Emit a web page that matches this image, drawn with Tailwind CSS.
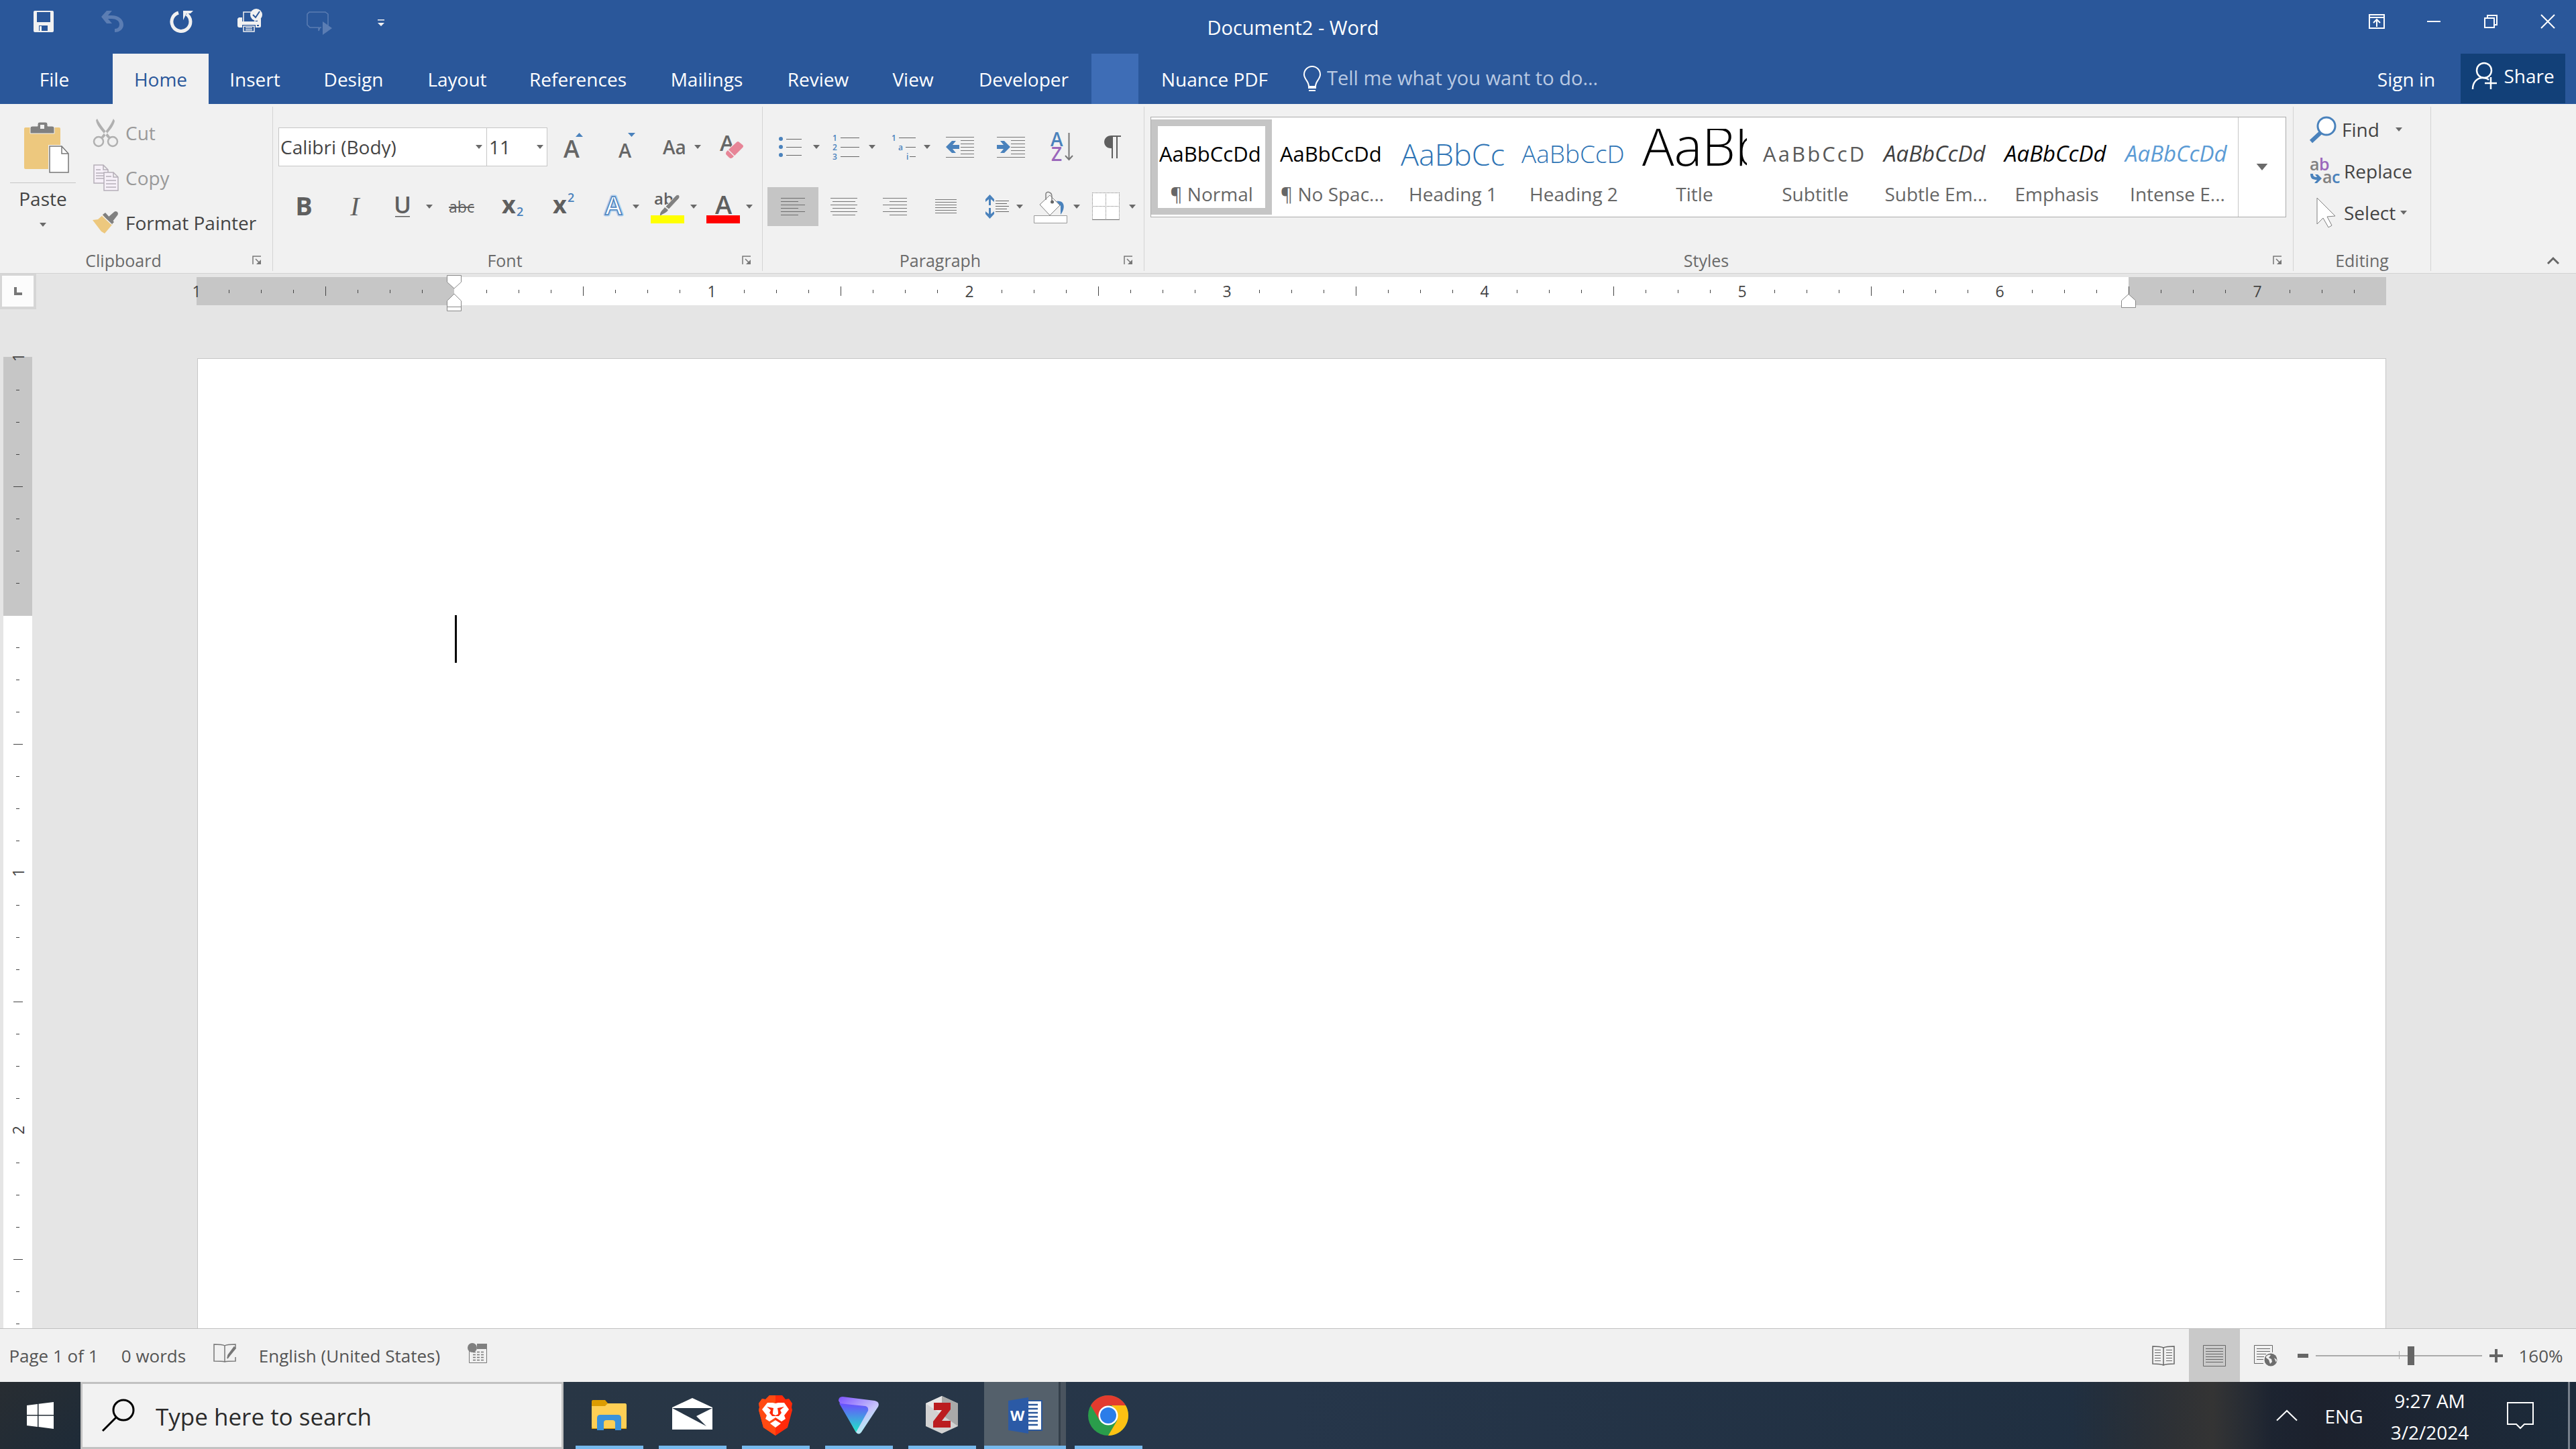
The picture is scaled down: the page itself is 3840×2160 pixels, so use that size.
<!DOCTYPE html>
<html lang="en">
<head>
<meta charset="utf-8">
<meta name="viewport" content="width=device-width, initial-scale=1">
<title>Document2 - Word</title>
<script src="https://cdn.jsdelivr.net/npm/@tailwindcss/browser@4"></script>
</head>
<body class="flex h-screen flex-col overflow-hidden bg-[#e5e5e5] font-['Open_Sans','Noto_Sans',sans-serif] text-[28px] leading-8 text-[#444] [&_svg]:overflow-visible">

<!-- Shared symbols -->
<svg class="hidden" aria-hidden="true">
  <symbol id="caret" viewBox="0 0 10 6"><path d="M0 0h10L5 6z" fill="#6a6a6a"/></symbol>
  <symbol id="launcher" viewBox="0 0 14 14"><path d="M1 13V1h12M5 5l6 6" fill="none" stroke="#777" stroke-width="1.5"/><path d="M13 6v7H6z" fill="#777"/></symbol>
</svg>

<header class="shrink-0 bg-[#2a579a] text-white">
  <div class="flex h-20">
    <div class="flex h-16 flex-1 pl-[15px]">
      <button aria-label="Save" class="flex w-[102px] items-center justify-center"><svg width="48" height="48" viewBox="0 0 48 48"><path fill="#f1f1f1" fill-rule="evenodd" d="M10 8h26a2 2 0 0 1 2 2v28a2 2 0 0 1-2 2H10a2 2 0 0 1-2-2V10a2 2 0 0 1 2-2zm3 2v15h20V10zm3 20v8h1v-7h3v7h9v-8z"/></svg></button>
      <button aria-label="Undo" class="flex w-[102px] items-center justify-center"><svg width="48" height="48" viewBox="0 0 48 48" fill="#5b7db3"><path d="M7 17 15 8h8l-6 7h5c11 0 18 6 18 14 0 6-5 11-13 11v-5c5 0 7-3 7-7 0-5-5-8-12-8h-5l6 7h-8z"/></svg></button>
      <button aria-label="Repeat" class="flex w-[102px] items-center justify-center"><svg width="48" height="48" viewBox="0 0 48 48"><path d="M20 11a14 14 0 1 0 12 2" fill="none" stroke="#f1f1f1" stroke-width="5"/><path d="M27 22V8h15l-4 4h-6z" fill="#f1f1f1"/></svg></button>
      <button aria-label="Print preview" class="flex w-[102px] items-center justify-center"><svg width="48" height="48" viewBox="0 0 48 48"><rect x="15" y="10" width="17" height="17" fill="#2a579a" stroke="#f1f1f1" stroke-width="1.5"/><path d="M8 18h5v6h23v-6h2a3 3 0 0 1 3 3v10a2 2 0 0 1-2 2h-6v-4H13v4H9a3 3 0 0 1-3-3V20z" fill="#f1f1f1"/><rect x="15" y="31" width="16" height="8" fill="#2a579a" stroke="#f1f1f1" stroke-width="1.5"/><path d="M18 33.500h10M18 36.500h10" stroke="#f1f1f1" stroke-width="1.500"/><rect x="35" y="29" width="3" height="2" fill="#2a579a"/><circle cx="34" cy="14" r="9" fill="#f1f1f1"/><path d="m29 14 4 4 6-9" fill="none" stroke="#2a579a" stroke-width="2"/></svg></button>
      <button aria-label="Touch mode" class="flex w-[102px] items-center justify-center"><svg width="48" height="48" viewBox="0 0 48 48"><path d="M29 33h-2l-2 5v-5H12l-4-4V13l3-3h24l4 3v17" fill="none" stroke="#5b7db3" stroke-width="1.500"/><path d="m31 24 14 10-14 10z" fill="#5b7db3"/></svg></button>
      <button aria-label="Customize quick access toolbar" class="flex w-[86px] items-center justify-center"><svg width="48" height="48" viewBox="0 0 48 48" fill="#f1f1f1"><path d="M19 21h10v1.500H19zM19 26h10l-5 5z"/></svg></button>
    </div>
    <h1 class="pt-[25px] text-[29px]">Document2 - Word</h1>
    <div class="flex h-16 flex-1 justify-end">
      <button aria-label="Ribbon display options" class="flex w-[85px] items-center justify-center"><svg width="24" height="22" viewBox="0 0 24 22" fill="none" stroke="#fff" stroke-width="2"><path d="M1 1h22v20H1zM1 5h22M12 19V9M7 13l5-5 5 5"/></svg></button>
      <button aria-label="Minimize" class="flex w-[85px] items-center justify-center"><svg width="20" height="20" viewBox="0 0 20 20"><path d="M0 9h20v2H0z" fill="#fff"/></svg></button>
      <button aria-label="Restore" class="flex w-[85px] items-center justify-center"><svg width="20" height="20" viewBox="0 0 20 20" fill="none" stroke="#fff" stroke-width="2"><path d="M1 5h14v14H1zM5 5V1h14v14h-4"/></svg></button>
      <button aria-label="Close" class="flex w-[85px] items-center justify-center"><svg width="20" height="20" viewBox="0 0 20 20"><path d="m0 0 20 20M20 0 0 20" stroke="#fff" stroke-width="2"/></svg></button>
    </div>
  </div>
  <nav class="flex h-[75px] items-stretch">
    <button class="mr-[6px] w-[162px]">File</button>
    <button class="w-[143px] bg-[#f1f1f1] text-[#2a579a]">Home</button>
    <button class="w-[138px]">Insert</button>
    <button class="w-[156px]">Design</button>
    <button class="w-[153px]">Layout</button>
    <button class="w-[207px]">References</button>
    <button class="w-[177px]">Mailings</button>
    <button class="w-[155px]">Review</button>
    <button class="w-[128px]">View</button>
    <button class="w-[202px]">Developer</button>
    <button aria-label="Add-in tab" class="w-[70px] bg-[#3e6db6]"></button>
    <button class="w-[227px]">Nuance PDF</button>
    <label class="flex items-center pl-[18px]">
      <svg width="28" height="40" viewBox="0 0 28 40"><path d="M9 31c0-8-7-11-7-18a12 12 0 0 1 24 0c0 7-7 10-7 18z" fill="none" stroke="#fff" stroke-width="2"/><path d="M8 30h12v4H8zM9 36h10v2H9z" fill="#fff"/></svg>
      <input type="text" placeholder="Tell me what you want to do..." aria-label="Tell me what you want to do" class="ml-2 w-[440px] bg-transparent pb-1 text-[29px] outline-none placeholder:text-[#b9c9e2]">
    </label>
    <div class="ml-auto flex pr-4">
      <button class="w-[162px]">Sign in</button>
      <button class="mb-px flex w-[156px] items-center justify-center gap-2 bg-[#124078] pb-2"><svg width="40" height="42" viewBox="0 0 40 42" fill="none" stroke="#fff" stroke-width="2.500"><circle cx="19" cy="13" r="11"/><path d="M2 41c0-10 6-17 15-17 4 0 7 1 9 3M20 32h18M29 23v18"/></svg>Share</button>
    </div>
  </nav>
</header>

<!-- Ribbon -->
<div class="flex h-[253px] shrink-0 border-b border-[#d2d2d2] bg-[#f1f1f1] pt-1 pb-[3px]">

  <section aria-label="Clipboard" class="flex w-[407px] flex-col justify-between border-r border-[#d4d4d4]">
    <div class="flex">
      <button class="flex w-32 flex-col items-center pt-[23px]">
        <svg class="ml-3" width="68" height="76" viewBox="0 0 68 76"><path d="M2 8h50a2 2 0 0 1 2 2v58a2 2 0 0 1-2 2H2a2 2 0 0 1-2-2V10a2 2 0 0 1 2-2z" fill="#edc87e"/><path d="M9 17V9a3 3 0 0 1 3-3h8V3a3 3 0 0 1 3-3h9a3 3 0 0 1 3 3v3h7a3 3 0 0 1 3 3v8z" fill="#808080" stroke="#f1f1f1"/><path d="M24 4h6v6h-6z" fill="#f1f1f1"/><path d="M36 34h32v42H36z" fill="#f1f1f1"/><path d="M38 36h18l10 11v28H38z" fill="#fff" stroke="#777" stroke-width="1.500"/><path d="M56 36v11h10" fill="none" stroke="#777" stroke-width="1.500"/></svg>
        <span class="mt-[14px] h-px w-[98px] bg-[#c6c6c6]"></span>
        <span class="mt-[7px]">Paste</span>
        <svg class="mt-5" width="10" height="6"><use href="#caret"/></svg>
      </button>
      <div class="ml-2 flex flex-col pt-[5px]">
        <button class="flex h-[67px] items-center gap-[9px] text-[#999]"><svg width="42" height="44" viewBox="0 0 42 44" fill="none" stroke="#b0b0b0"><circle cx="11" cy="35" r="7" stroke-width="2.500"/><circle cx="32" cy="35" r="7" stroke-width="2.500"/><path d="M9 1 7 3c1 8 8 15 18 27l4-1C22 19 14 12 9 1zM33 1l2 3c-1 7-7 14-17 26l-4-1C21 20 28 13 33 1z" fill="#b0b0b0" stroke="none"/></svg>Cut</button>
        <button class="flex h-[67px] items-center gap-[9px] text-[#999]"><svg width="42" height="40" viewBox="0 0 42 40" fill="#f6f0f8" stroke="#b5aeb8" stroke-width="1.500"><path d="M4 1h14l7 7v20H4zM18 1v7h7M7 8h7M7 13h14M7 17h14M7 21h14"/><path d="M19 12h14l7 7v20H19zM33 12v7h7M22 18h8M22 24h15M22 29h15M22 34h15"/></svg>Copy</button>
        <button class="flex h-[67px] items-center gap-[9px]"><svg width="42" height="36" viewBox="0 0 42 36"><path d="m2 14 8-1 8-7 14 14-12 14L15 31z" fill="#edc87e"/><path d="m17 6 4-3 13 14-4 4z" fill="#808080"/><path d="m26 9 8-7c3-3 8 1 5 5l-7 9z" fill="#808080"/><path d="m16 7 15 14" stroke="#f1f1f1" stroke-width="1.500"/></svg>Format Painter</button>
      </div>
    </div>
    <div class="flex h-8 items-center pr-4 text-[25px] text-[#6a6a6a]"><span class="flex-1 pr-2 text-center">Clipboard</span><button aria-label="Clipboard settings"><svg width="14" height="14"><use href="#launcher"/></svg></button></div>
  </section>

  <section aria-label="Font" class="flex w-[730px] flex-col justify-between border-r border-[#d4d4d4] pl-2">
    <div class="flex flex-col gap-[31px] pt-[31px]">
      <div class="flex h-[58px] items-stretch">
        <div class="relative">
          <select aria-label="Font name" class="h-[58px] w-[311px] appearance-none border border-[#c6c6c6] bg-white pl-[2px] text-[28px] outline-none"><option>Calibri (Body)</option></select>
          <svg class="pointer-events-none absolute top-[26px] right-[7px]" width="10" height="6"><use href="#caret"/></svg>
        </div>
        <div class="relative">
          <select aria-label="Font size" class="h-[58px] w-[90px] appearance-none border border-l-0 border-[#c6c6c6] bg-white pl-[3px] text-[28px] outline-none"><option>11</option></select>
          <svg class="pointer-events-none absolute top-[26px] right-[6px]" width="10" height="6"><use href="#caret"/></svg>
        </div>
        <button aria-label="Grow font" class="flex w-20 items-center justify-center"><svg width="36" height="44" viewBox="0 0 36 44"><text x="2" y="38" font-size="36" font-weight="600" fill="#666">A</text><path d="m20 7 5.500-6L31 7z" fill="#4a82bc"/></svg></button>
        <button aria-label="Shrink font" class="flex w-[76px] items-center justify-center"><svg width="36" height="44" viewBox="0 0 36 44"><text x="6" y="38" font-size="29" font-weight="600" fill="#666">A</text><path d="M20 1h11l-5.500 6z" fill="#4a82bc"/></svg></button>
        <button aria-label="Change case" class="flex w-[90px] items-center gap-3 pl-4 font-semibold text-[#666]">Aa<svg width="10" height="6"><use href="#caret"/></svg></button>
        <button aria-label="Clear formatting" class="flex w-[58px] items-center justify-center"><svg width="36" height="44" viewBox="0 0 36 44"><text x="0" y="28" font-size="33" font-weight="600" fill="#666">A</text><path d="M8 31 24 13l11 11-15 16-6-1-5-4z" fill="#f1f1f1"/><path d="M25 15q2-2 4 0l5 4q2 2 0 4L22 35l-9-9zM12 27l9 9-2 2q-3 2-5 0l-4-4q-2-2 0-5z" fill="#e78597"/></svg></button>
      </div>
      <div class="flex h-[58px] items-stretch text-[#5f5f5f]">
        <button aria-label="Bold" class="w-[76px] pb-1 text-[38px] font-bold">B</button>
        <button aria-label="Italic" class="w-[76px] font-['Liberation_Serif',serif] text-[40px] italic">I</button>
        <button aria-label="Underline" class="flex w-[83px] items-center gap-[22px] pl-5"><svg width="26" height="36" viewBox="0 0 26 36"><text x="0" y="28" font-size="35" font-weight="600" fill="#5f5f5f">U</text><path d="M2 32h22v1.500H2z" fill="#5f5f5f"/></svg><svg width="10" height="6"><use href="#caret"/></svg></button>
        <button aria-label="Strikethrough" class="w-[76px] text-[23px] line-through">abc</button>
        <button aria-label="Subscript" class="flex w-[76px] items-center justify-center"><svg width="36" height="44" viewBox="0 0 36 44"><text x="2" y="32" font-size="36" font-weight="700" fill="#5f5f5f">x</text><text x="24" y="36" font-size="18" font-weight="600" fill="#4a82bc">2</text></svg></button>
        <button aria-label="Superscript" class="flex w-[76px] items-center justify-center"><svg width="36" height="44" viewBox="0 0 36 44"><text x="2" y="32" font-size="36" font-weight="700" fill="#5f5f5f">x</text><text x="24" y="15" font-size="18" font-weight="600" fill="#4a82bc">2</text></svg></button>
        <button aria-label="Text effects" class="flex w-[84px] items-center gap-[11px] pl-5"><svg width="34" height="44" viewBox="0 0 34 44"><text x="4" y="34" font-size="38" font-weight="600" fill="#fff" stroke="#b4d0ee" stroke-width="5" stroke-linejoin="round">A</text><text x="4" y="34" font-size="38" font-weight="600" fill="#fff" stroke="#4a82bc" stroke-width="1.500">A</text></svg><svg width="10" height="6"><use href="#caret"/></svg></button>
        <button aria-label="Text highlight color" class="flex w-[83px] items-center gap-[9px] pl-2"><svg width="50" height="50" viewBox="0 0 50 50"><text x="5" y="22" font-size="24" font-weight="600" fill="#5f5f5f">ab</text><path d="M22 25 37 9c4-4 8 0 5 4L27 29z" fill="#808080" stroke="#f1f1f1"/><path d="m21 26 5 4c-3 5-8 5-12 9-1-6 4-9 7-13z" fill="#808080"/><path d="M0 38h50v12H0z" fill="#ff0"/></svg><svg width="10" height="6"><use href="#caret"/></svg></button>
        <button aria-label="Font color" class="flex w-[83px] items-center gap-[9px] pl-2"><svg width="50" height="50" viewBox="0 0 50 50"><text x="13" y="36" font-size="38" font-weight="600" fill="#5f5f5f">A</text><path d="M0 38h50v12H0z" fill="red"/></svg><svg width="10" height="6"><use href="#caret"/></svg></button>
      </div>
    </div>
    <div class="flex h-8 items-center pr-4 text-[25px] text-[#6a6a6a]"><span class="flex-1 pr-4 text-center">Font</span><button aria-label="Font settings"><svg width="14" height="14"><use href="#launcher"/></svg></button></div>
  </section>

  <section aria-label="Paragraph" class="flex w-[569px] flex-col justify-between border-r border-[#d4d4d4] pl-[7px]">
    <div class="flex flex-col gap-[31px] pt-[31px]">
      <div class="flex h-[58px] items-stretch">
        <button aria-label="Bullets" class="flex w-[85px] items-center gap-[17px] pl-4"><svg width="35" height="32" viewBox="0 0 35 32"><g fill="#4a82bc"><circle cx="4" cy="4" r="3"/><circle cx="4" cy="16" r="3"/><circle cx="4" cy="28" r="3"/></g><path d="M12 4.500h23M12 16.500h23M12 28.500h23" stroke="#666"/></svg><svg width="10" height="6"><use href="#caret"/></svg></button>
        <button aria-label="Numbering" class="flex w-[84px] items-center gap-[14px] pl-3"><svg width="40" height="40" viewBox="0 0 40 40"><g font-size="12" font-weight="600" fill="#4a82bc"><text x="0" y="11">1</text><text x="0" y="25">2</text><text x="0" y="39">3</text></g><path d="M12 6.500h28M12 20.500h28M12 34.500h28" stroke="#666"/></svg><svg width="10" height="6"><use href="#caret"/></svg></button>
        <button aria-label="Multilevel list" class="flex w-20 items-center gap-[12px] pl-4"><svg width="36" height="40" viewBox="0 0 36 40"><g font-size="12" font-weight="600" fill="#4a82bc"><text x="0" y="11">1</text><text x="10" y="25">a</text><text x="22" y="39">i</text></g><path d="M11 6.500h25M21 20.500h15M27 34.500h9" stroke="#666"/></svg><svg width="10" height="6"><use href="#caret"/></svg></button>
        <button aria-label="Decrease indent" class="flex w-[76px] items-center justify-center"><svg width="42" height="32" viewBox="0 0 42 32"><path d="M0 1.500h42M22 6.500h20M22 11.500h20M22 16.500h20M22 21.500h20M22 26.500h20M0 31.500h42" stroke="#777"/><path d="m0 16 9-9h6l-5 6h10v6H10l5 6H9z" fill="#4a82bc"/></svg></button>
        <button aria-label="Increase indent" class="flex w-[76px] items-center justify-center"><svg width="42" height="32" viewBox="0 0 42 32"><path d="M0 1.500h42M21 6.500h21M21 11.500h21M21 16.500h21M21 21.500h21M21 26.500h21M0 31.500h42" stroke="#777"/><path d="m20 16-9-9H5l5 6H0v6h10l-5 6h6z" fill="#4a82bc"/></svg></button>
        <button aria-label="Sort" class="flex w-[76px] items-center justify-center"><svg width="34" height="44" viewBox="0 0 34 44"><text x="0" y="21" font-size="28" font-weight="600" fill="#4a82bc">A</text><text x="1" y="43" font-size="28" font-weight="600" fill="#9b67bb">Z</text><path d="M27.500 1v40M22 35l5.500 6 5.500-6" fill="none" stroke="#777" stroke-width="2"/></svg></button>
        <button aria-label="Show formatting marks" class="flex w-[76px] items-center justify-center"><svg width="26" height="36" viewBox="0 0 26 36"><path d="M11 1h14v2h-5v32h-2V3h-5v32h-2V20C-3 21-4 1 11 1z" fill="#5f5f5f"/></svg></button>
      </div>
      <div class="flex h-[58px] items-stretch">
        <button aria-label="Align left" class="flex w-[76px] items-center justify-center bg-[#c5c5c5]"><svg width="36" height="28" viewBox="0 0 36 28" stroke="#6d6d6d"><path d="M0 1.500h36M0 6.500h26M0 11.500h36M0 16.500h26M0 21.500h36M0 26.500h26"/></svg></button>
        <button aria-label="Center" class="flex w-[76px] items-center justify-center"><svg width="40" height="28" viewBox="0 0 40 28" stroke="#777"><path d="M0 1.500h40M3 6.500h34M0 11.500h40M3 16.500h34M0 21.500h40M3 26.500h34"/></svg></button>
        <button aria-label="Align right" class="flex w-[76px] items-center justify-center"><svg width="36" height="28" viewBox="0 0 36 28" stroke="#777"><path d="M0 1.500h36M10 6.500h26M0 11.500h36M10 16.500h26M0 21.500h36M10 26.500h26"/></svg></button>
        <button aria-label="Justify" class="flex w-[76px] items-center justify-center"><svg width="32" height="22" viewBox="0 0 32 22" stroke="#777"><path d="M0 .5h32M0 4.500h32M0 8.500h32M0 12.500h32M0 16.500h32M0 20.500h32"/></svg></button>
        <button aria-label="Line spacing" class="flex w-[83px] items-center gap-[11px] pl-[21px]"><svg width="35" height="36" viewBox="0 0 35 36"><path d="m6.500 0 6.500 7v4L8 7v9H5V7l-5 4V7zM6.500 36l6.500-7v-4l-5 4v-9H5v9l-5-4v4z" fill="#4a82bc"/><path d="M15 9.500h20M15 13.500h17M15 17.500h20M15 21.500h17M15 25.500h20" stroke="#666"/></svg><svg width="10" height="6"><use href="#caret"/></svg></button>
        <button aria-label="Shading" class="flex w-[85px] items-center gap-[9px] pl-[10px]"><svg width="50" height="50" viewBox="0 0 50 50"><path d="M34 17c12-2 14 10 6 20V24z" fill="#4a82bc"/><path d="m24 8 15 15-15 15L9 22z" fill="#fff" stroke="#808080"/><path d="M18 15V6c0-4 9-4 9 4v8" fill="none" stroke="#808080" stroke-width="1.500"/><circle cx="27.500" cy="18" r="2.500" fill="#666"/><path d="M.5 38.500h49v11H.5z" fill="#fff" stroke="#999"/></svg><svg width="10" height="6"><use href="#caret"/></svg></button>
        <button aria-label="Borders" class="flex w-[80px] items-center gap-[14px] pl-3"><svg width="41" height="42" viewBox="0 0 41 42"><path d="M0 0h41v41H0z" fill="#fff"/><path d="M0 .5h41M0 20.500h41M.5 0v41M20.500 0v41M40.500 0v41" stroke="#777" stroke-dasharray="1 1"/><path d="M0 40.500h41" stroke="#666"/></svg><svg width="10" height="6"><use href="#caret"/></svg></button>
      </div>
    </div>
    <div class="flex h-8 items-center pr-4 text-[25px] text-[#6a6a6a]"><span class="flex-1 pr-4 text-center">Paragraph</span><button aria-label="Paragraph settings"><svg width="14" height="14"><use href="#launcher"/></svg></button></div>
  </section>

  <section aria-label="Styles" class="flex w-[1713px] flex-col justify-between border-r border-[#d4d4d4] pl-[9px]">
    <div class="pt-[15px]">
      <div class="flex h-[150px] w-[1693px] border border-[#ababab] bg-white text-[#666]">
        <button class="my-[3px] w-[180px] shrink-0 border-[10px] border-[#c5c5c5] px-[2px] pt-[3px]"><span class="flex h-14 items-end text-[31px] leading-[38px] whitespace-nowrap text-black">AaBbCcDd</span><span class="mt-5 block h-[42px] leading-[42px] whitespace-nowrap">¶ Normal</span></button>
        <button class="my-[3px] w-[180px] shrink-0 border-[10px] border-transparent px-[2px] pt-[3px]"><span class="flex h-14 items-end text-[31px] leading-[38px] whitespace-nowrap text-black">AaBbCcDd</span><span class="mt-5 block h-[42px] leading-[42px] whitespace-nowrap">¶ No Spac...</span></button>
        <button class="my-[3px] w-[180px] shrink-0 border-[10px] border-transparent px-[2px] pt-[3px]"><span class="flex h-14 items-end overflow-hidden text-[45px] leading-9 font-light whitespace-nowrap text-[#2e74b5]">AaBbCc</span><span class="mt-5 block h-[42px] leading-[42px] whitespace-nowrap">Heading 1</span></button>
        <button class="my-[3px] w-[180px] shrink-0 border-[10px] border-transparent px-[2px] pt-[3px]"><span class="flex h-14 items-end text-[37px] leading-[38px] font-light whitespace-nowrap text-[#2e74b5]">AaBbCcD</span><span class="mt-5 block h-[42px] leading-[42px] whitespace-nowrap">Heading 2</span></button>
        <button class="my-[3px] w-[180px] shrink-0 border-[10px] border-transparent px-[2px] pt-[3px]"><span class="flex h-14 items-end overflow-hidden text-[79px] leading-[62px] font-light whitespace-nowrap text-black">AaBb</span><span class="mt-5 block h-[42px] leading-[42px] whitespace-nowrap">Title</span></button>
        <button class="my-[3px] w-[180px] shrink-0 border-[10px] border-transparent px-[2px] pt-[3px]"><span class="flex h-14 items-end text-[31px] leading-[38px] tracking-widest whitespace-nowrap text-[#5a5a5a]">AaBbCcD</span><span class="mt-5 block h-[42px] leading-[42px] whitespace-nowrap">Subtitle</span></button>
        <button class="my-[3px] w-[180px] shrink-0 border-[10px] border-transparent px-[2px] pt-[3px]"><span class="flex h-14 items-end text-[33px] leading-[38px] whitespace-nowrap text-[#404040] italic">AaBbCcDd</span><span class="mt-5 block h-[42px] leading-[42px] whitespace-nowrap">Subtle Em...</span></button>
        <button class="my-[3px] w-[180px] shrink-0 border-[10px] border-transparent px-[2px] pt-[3px]"><span class="flex h-14 items-end text-[33px] leading-[38px] whitespace-nowrap text-black italic">AaBbCcDd</span><span class="mt-5 block h-[42px] leading-[42px] whitespace-nowrap">Emphasis</span></button>
        <button class="my-[3px] w-[180px] shrink-0 border-[10px] border-transparent px-[2px] pt-[3px]"><span class="flex h-14 items-end text-[33px] leading-[38px] whitespace-nowrap text-[#5b9bd5] italic">AaBbCcDd</span><span class="mt-5 block h-[42px] leading-[42px] whitespace-nowrap">Intense E...</span></button>
        <button aria-label="More styles" class="flex flex-1 items-center justify-center border-l border-[#c6c6c6]"><svg width="18" height="10"><use href="#caret"/></svg></button>
      </div>
    </div>
    <div class="flex h-8 items-center pr-4 text-[25px] text-[#6a6a6a]"><span class="flex-1 pr-4 text-center">Styles</span><button aria-label="Styles settings"><svg width="14" height="14"><use href="#launcher"/></svg></button></div>
  </section>

  <section aria-label="Editing" class="flex w-[205px] flex-col justify-between border-r border-[#d4d4d4]">
    <div class="flex flex-col items-start pt-[3px] pl-6">
      <button class="flex h-[62px] items-center gap-1"><svg width="44" height="44" viewBox="0 0 44 44"><circle cx="25" cy="17" r="13" fill="#fff" stroke="#4a82bc" stroke-width="3"/><path d="M16 27 2 40" stroke="#4a82bc" stroke-width="6"/></svg>Find<svg class="ml-5" width="10" height="6"><use href="#caret"/></svg></button>
      <button class="flex h-[62px] items-center gap-[7px]"><svg width="44" height="44" viewBox="0 0 44 44"><g font-size="25" font-weight="600"><text x="0" y="21" fill="#808080">a</text><text x="14" y="21" fill="#9b67bb">b</text><text x="19" y="40" fill="#808080">a</text><text x="33" y="40" fill="#4a82bc">c</text></g><path d="M1 26h4c0 4 2 5 6 5l-3-4h4l6 6-7 7H7l4-5C4 35 1 33 1 26z" fill="#4a82bc"/></svg>Replace</button>
      <button class="flex h-[62px] items-center gap-[7px]"><svg width="44" height="46" viewBox="0 0 44 46"><path d="M11 1v39l9-9 8 14 5-3-7-13 12-1z" fill="#fff" stroke="#808080"/></svg>Select<svg width="10" height="6"><use href="#caret"/></svg></button>
    </div>
    <div class="h-8 text-center text-[25px] text-[#6a6a6a]">Editing</div>
  </section>
  <div class="flex flex-1 items-end justify-end pr-6 pb-[10px]">
    <button aria-label="Collapse the ribbon"><svg width="20" height="12" viewBox="0 0 20 12"><path d="m2 11 8-8 8 8" fill="none" stroke="#666" stroke-width="3"/></svg></button>
  </div>
</div>

<!-- Document area -->
<main class="flex min-h-0 flex-1 flex-col overflow-hidden">
  <div class="flex h-[53px] shrink-0">
    <button aria-label="Tab selector" class="flex w-[54px] items-center justify-center border-4 border-l-[3px] border-t-[3px] border-[#d6d6d6] bg-[#fcfcfc]"><svg width="12" height="12" viewBox="0 0 12 12"><path d="M0 0h4v8h8v4H0z" fill="#777"/></svg></button>
    <div class="relative mt-[5px] mr-[283px] ml-[239px] flex h-[42px] flex-1">
      <div class="w-96 bg-[#c6c6c6]"></div>
      <div class="flex-1 bg-white"></div>
      <div class="w-96 bg-[#c6c6c6]"></div>
      <div id="h-ruler" class="absolute inset-0 flex items-center justify-between text-[23px]"></div>
      <svg class="absolute -top-[3px] left-[373px]" width="22" height="54" viewBox="0 0 22 54"><path d="M.5.500h21v10L11 20 .5 10.500zM.5 38.500L11 28l10.500 10.500v15H.5zM0 47.500h22" fill="#fff" stroke="#888"/></svg>
      <svg class="absolute top-[25px] right-[373px]" width="22" height="21" viewBox="0 0 22 21"><path d="M.5 20.500V10L11 .5 21.500 10v10.500z" fill="#fff" stroke="#888"/></svg>
    </div>
  </div>
  <div class="flex min-h-0 flex-1">
    <div class="relative mt-[71px] ml-[5px] w-[43px] shrink-0 bg-white">
      <div class="h-[386px] bg-[#c6c6c6]"></div>
      <div class="absolute inset-x-0 -top-6 bottom-0 overflow-hidden"><div id="v-ruler" class="flex flex-col items-center pt-px text-[23px]"></div></div>
    </div>
    <div role="textbox" aria-label="Document" aria-multiline="true" class="mt-[73px] mr-[283px] ml-[246px] flex-1 border border-b-0 border-[#c6c6c6] bg-white pt-[382px] pl-[383px]">
      <div class="h-[71px] w-[3px] bg-black"></div>
    </div>
  </div>
</main>

<footer class="flex h-20 shrink-0 items-stretch border-t border-[#c0c0c0] bg-[#f1f1f1] text-[26px] text-[#555]">
  <div class="flex items-center">
    <button class="w-[160px]">Page 1 of 1</button>
    <button class="w-[138px]">0 words</button>
    <button aria-label="Proofing" class="ml-5 mb-2"><svg width="36" height="30" viewBox="0 0 36 30" fill="none" stroke="#777" stroke-width="1.500"><path d="M33 8V2c-6 0-13 0-16 2-3-2-10-2-16-2v25c6 0 13 0 16 1 3-1 10-1 16-1v-6M17 4v24"/><path d="m33 8-9 11-3 4 1-5 9-12z" fill="#777"/></svg></button>
    <button class="w-[334px]">English (United States)</button>
    <button aria-label="Macro recording" class="ml-[8px] mb-2"><svg width="32" height="32" viewBox="0 0 32 32"><path d="M3.500 8v22.500h26V3" fill="none" stroke="#777"/><path d="M15 2h15v8H15z" fill="#808080"/><circle cx="8" cy="8" r="7" fill="#808080"/><path d="M9 14.500h17M9 18.500h17M9 22.500h17M9 26.500h17" stroke="#777" stroke-width="1.500" stroke-dasharray="4 2"/></svg></button>
  </div>
  <div class="ml-auto flex items-center">
    <button aria-label="Read mode" class="flex h-full w-[76px] items-center justify-center"><svg width="34" height="30" viewBox="0 0 34 30" fill="none" stroke="#666"><path d="M17 3C13 1 6 1 1 1v26c6 0 12 0 16 2 4-2 10-2 16-2V1c-5 0-12 0-16 2zM17 3v26" stroke-width="1.500"/><path d="M4 6.500h9M4 10.500h9M4 14.500h9M4 18.500h9M4 22.500h9M21 6.500h9M21 10.500h9M21 14.500h9M21 18.500h9M21 22.500h9"/></svg></button>
    <button aria-label="Print layout" class="flex h-full w-[76px] items-center justify-center bg-[#c9c9c9]"><svg width="34" height="32" viewBox="0 0 34 32" fill="none" stroke="#666"><path d="M.5.500h33v31H.5zM4 5.500h26M4 9.500h26M4 13.500h26M4 17.500h26M4 21.500h26M4 25.500h26"/></svg></button>
    <button aria-label="Web layout" class="flex h-full w-[76px] items-center justify-center"><svg width="34" height="32" viewBox="0 0 34 32"><path d="M14 27.500H.5V.500h27V11M4 5.500h20M4 9.500h20M4 13.500h14M4 17.500h11M4 21.500h10" fill="none" stroke="#666"/><circle cx="25" cy="22" r="9.500" fill="#6d6d6d"/><path d="M18 17c3-3 6-3 7-2l-3 4 4 2 1 4-3 3-2-6-4-3zM30 19l4 3-1 4z" fill="#f1f1f1"/></svg></button>
    <button aria-label="Zoom out" class="ml-[10px]"><svg width="16" height="6"><path d="M0 0h16v6H0z" fill="#666"/></svg></button>
    <div class="relative ml-[11px] flex h-10 w-[248px] items-center">
      <span class="absolute top-[13px] left-[124px] h-3 w-px bg-[#aaa]"></span>
      <input type="range" min="0" max="1000" value="576" aria-label="Zoom" class="relative h-7 w-[248px] appearance-none bg-transparent [&::-webkit-slider-runnable-track]:h-[2px] [&::-webkit-slider-runnable-track]:bg-[#aaa] [&::-webkit-slider-thumb]:-mt-[13px] [&::-webkit-slider-thumb]:h-7 [&::-webkit-slider-thumb]:w-[10px] [&::-webkit-slider-thumb]:appearance-none [&::-webkit-slider-thumb]:bg-[#666]">
    </div>
    <button aria-label="Zoom in" class="ml-[11px]"><svg width="20" height="20" viewBox="0 0 20 20"><path d="M8 0h4v8h8v4h-8v8H8v-8H0V8h8z" fill="#666"/></svg></button>
    <button class="w-[109px] pl-1">160%</button>
  </div>
</footer>

<!-- Windows taskbar -->
<div class="flex h-[100px] shrink-0 items-stretch bg-linear-to-r from-[#2a3641] via-[#26364a] to-[#1c2b3b] text-white">
  <button aria-label="Start" class="flex w-[120px] items-center justify-center bg-linear-to-br from-[#282d32] to-[#1e2b38]"><svg width="40" height="40" viewBox="0 0 40 40" fill="#fff"><path d="m0 5 16-2v16H0zM17.500 2.800 40 0v19H17.500zM0 20.500h16V37L0 35zM17.500 20.500H40V40l-22.500-3z"/></svg></button>
  <label class="flex w-[720px] items-center border-[3px] border-[#c2c2c2] bg-[#f2f2f2] pl-[29px]">
    <svg width="50" height="50" viewBox="0 0 50 50" fill="none" stroke="#000" stroke-width="3"><circle cx="32" cy="17" r="15"/><path d="M21 28 1 48"/></svg>
    <input type="text" placeholder="Type here to search" aria-label="Search" class="ml-[30px] w-[560px] bg-transparent pt-[3px] text-[35px] outline-none placeholder:text-[#2b2b2b]">
  </label>
  <div class="flex pl-[6px]">
    <button aria-label="File Explorer" class="flex w-[124px] flex-col items-center justify-between"><span class="flex h-[95px] items-center pt-1"><svg width="60" height="60" viewBox="0 0 60 60"><path d="M4 9q0-2 2-2h18l5 6h24q3 0 3 3v34H4z" fill="#dc9c00"/><path d="M4 16h20l4-4h26q2 0 2 3v32q0 2-2 2H6q-2 0-2-2z" fill="#fecf55"/><path d="M12 52V34q0-5 5-5h26q5 0 5 5v18h-9V41q0-4-4-4h-9q-4 0-4 4v11z" fill="#3a92dc"/></svg></span><span class="h-[5px] w-[101px] bg-[#76b9ed]"></span></button>
    <button aria-label="Mail" class="flex w-[124px] flex-col items-center justify-between"><span class="flex h-[95px] items-center pt-1"><svg width="60" height="60" viewBox="0 0 60 60" fill="#fff"><path d="M0 18 30 4l30 14v33H0zM0 19l51 27L36 31l24-12z" fill-rule="evenodd"/></svg></span><span class="h-[5px] w-[101px] bg-[#76b9ed]"></span></button>
    <button aria-label="Brave" class="flex w-[124px] flex-col items-center justify-between"><span class="flex h-[95px] items-center pt-1"><svg width="60" height="60" viewBox="0 0 60 60"><path d="M21 0h19l5 6 5-1 5 7-1 6 1 4-7 26-18 12-18-12L5 22l1-4-1-6 5-7 5 1z" fill="#ff2a0a"/><path d="M5 12l5-7 5 1 6-6h9v60L12 48 5 22l1-4z" fill="#ff4a12"/><path d="M18 11h8l4 1 4-1h9l7 10-7 9 2 5-6 4-9-6-9 6-6-4 2-5-7-9zM22 42l8-5 8 5-8 6z" fill="#fff"/><path d="m17 17 10 2-1 9 4 2 4-2-1-9 10-2-6 5 2 4-4 5h-10l-4-5 2-4z" fill="#ff2a0a"/><path d="m27 20 3-1 3 1 1 7-4 2-4-2z" fill="#fff"/></svg></span><span class="h-[5px] w-[101px] bg-[#76b9ed]"></span></button>
    <button aria-label="Proton VPN" class="flex w-[124px] flex-col items-center justify-between"><span class="flex h-[95px] items-center pt-1"><svg width="60" height="60" viewBox="0 0 60 60"><defs><linearGradient id="vpn-a" x1="0" y1="0" x2="0" y2="1"><stop offset="0" stop-color="#6b4dff"/><stop offset="1" stop-color="#1de9c6"/></linearGradient><linearGradient id="vpn-b" x1="0" y1="0" x2=".8" y2="1"><stop offset="0" stop-color="#7d52ff"/><stop offset=".6" stop-color="#c8c4fb"/><stop offset="1" stop-color="#a8fff0"/></linearGradient></defs><path d="M0 8q0-6 6-6l48 6q8 2 5 9L34 55q-4 5-8 0z" fill="url(#vpn-b)"/><path d="M1 12l39 4q5 1 4 7L26 55z" fill="url(#vpn-a)"/></svg></span><span class="h-[5px] w-[101px] bg-[#76b9ed]"></span></button>
    <button aria-label="Zotero" class="flex w-[124px] flex-col items-center justify-between"><span class="flex h-[95px] items-center pt-1"><svg width="60" height="60" viewBox="0 0 60 60"><path d="m30 1 24 11v34L30 57 6 46V12z" fill="#d2d2d2"/><path d="m30 1 24 11v34L30 29z" fill="#a9a9a9"/><path d="M30 1v28L6 12z" fill="#e6e6e6"/><path d="M18 11h25v10L30 38h13v10H17V39l13-17H18z" fill="#bb1d20"/></svg></span><span class="h-[5px] w-[101px] bg-[#76b9ed]"></span></button>
    <button aria-label="Word" class="mx-px flex w-[122px] flex-col justify-between bg-[#54606b]"><span class="flex h-[95px] w-full border-r-[8px] border-[#4a545f]"><span class="flex flex-1 items-center justify-center border-r-[3px] border-[#343f4a] pt-1 pl-3"><svg width="60" height="60" viewBox="0 0 60 60"><path d="M30 8h24v44H30z" fill="#fff" stroke="#2b579a" stroke-width="2"/><path d="M34 14h14M34 20h14M34 26h14M34 32h14M34 38h14M34 44h14" stroke="#2b579a" stroke-width="2.500"/><path d="M4 8 34 3v54L4 52z" fill="#2b5aa6"/><text x="7" y="38" font-size="22" font-weight="700" fill="#fff">W</text></svg></span></span><span class="h-[5px] w-full bg-[#76b9ed]"></span></button>
    <button aria-label="Chrome" class="flex w-[124px] flex-col items-center justify-between"><span class="flex h-[95px] items-center pt-1"><svg width="60" height="60" viewBox="0 0 60 60"><circle cx="30" cy="30" r="30" fill="#2a9d4b"/><path d="M4 15a30 30 0 0 1 52 0H30L17 37z" fill="#e33b2e"/><path d="M56 15a30 30 0 0 1-26 45l13-22q3-12-8-23z" fill="#fdc113"/><circle cx="30" cy="30" r="14.500" fill="#fff"/><circle cx="30" cy="30" r="12" fill="#2b7de9"/></svg></span><span class="h-[5px] w-[101px] bg-[#76b9ed]"></span></button>
  </div>
  <div class="ml-auto flex items-center bg-linear-to-r from-transparent from-0% via-[#1c212d] via-50% to-transparent to-100% text-[28px]">
    <div class="h-full w-[300px] bg-linear-to-r from-transparent via-[#343434] via-70% to-transparent"></div>
    <button aria-label="Show hidden icons" class="flex w-[42px] justify-center"><svg width="32" height="18" viewBox="0 0 32 18"><path d="M1 16.500 16 2l15 14.500" fill="none" stroke="#fff" stroke-width="2"/></svg></button>
    <button class="w-32 pt-[2px]">ENG</button>
    <button class="w-32 pt-[3px] leading-[47px] whitespace-nowrap">9:27 AM<br>3/2/2024</button>
    <button aria-label="Notifications" class="flex w-[142px] justify-center"><svg width="40" height="40" viewBox="0 0 40 40"><path d="M1 1h38v32H26l-6 6-6-6H1z" fill="none" stroke="#fff" stroke-width="2"/></svg></button>
    <button aria-label="Show desktop" class="h-full w-3 border-l-[3px] border-[#77808b]"></button>
  </div>
</div>

<script>
  const tickH = { small: 'h-[5px] w-px bg-[#444]', half: 'h-[14px] w-px bg-[#444]' };
  const tickV = { small: 'h-px w-[5px] bg-[#444]', half: 'h-px w-[14px] bg-[#444]' };

  // One entry per eighth of an inch; whole inches carry a number.
  function mark(i, tick) {
    const span = document.createElement('span');
    if (i % 8 === 0) span.textContent = i === 8 ? '' : Math.abs(i / 8 - 1);
    else span.className = i % 4 === 0 ? tick.half : tick.small;
    return span;
  }

  const h = document.getElementById('h-ruler');
  for (let i = 0; i <= 68; i++) {
    const cell = document.createElement('div');
    cell.className = 'flex w-0 justify-center';
    if (i < 68) { const m = mark(i, tickH); m.classList.add('shrink-0'); cell.append(m); }
    h.append(cell);
  }

  const v = document.getElementById('v-ruler');
  for (let i = 0; i <= 30; i++) {
    const cell = document.createElement('div');
    cell.className = 'flex h-12 shrink-0 items-center justify-center';
    const m = mark(i, tickV);
    if (i % 8 === 0) m.className = 'rotate-180 [writing-mode:vertical-rl]';
    cell.append(m);
    v.append(cell);
  }
</script>
</body>
</html>
